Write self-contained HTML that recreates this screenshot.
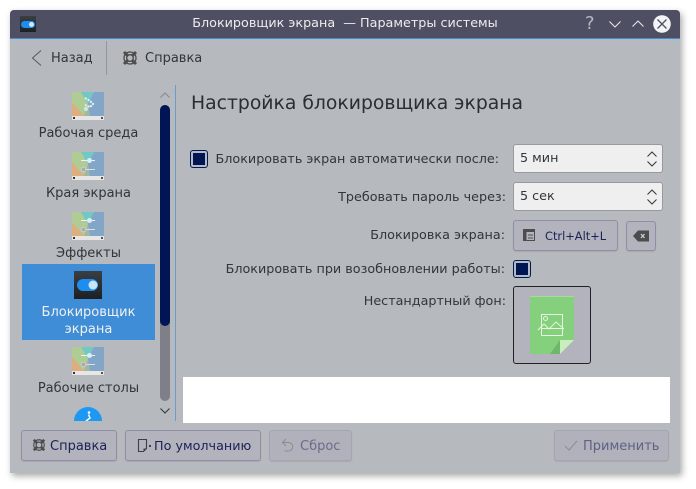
<!DOCTYPE html>
<html><head><meta charset="utf-8">
<style>
html,body{margin:0;padding:0;background:#fff;width:696px;height:489px;overflow:hidden}
body{font-family:"DejaVu Sans","Liberation Sans",sans-serif;font-size:13px;color:#31363b;position:relative}
#win{position:absolute;left:10px;top:10px;width:670px;height:463px;background:#b6b9bd;border-radius:4px 4px 0 0;box-shadow:2px 3px 7px rgba(0,0,0,.35);overflow:hidden}
.a{position:absolute;white-space:nowrap}
.t{position:absolute;white-space:nowrap;line-height:16px}
.c{text-align:center}
.r{text-align:right}
.f{font-size:12.75px}
.btn{position:absolute;box-sizing:border-box;border:1px solid #8e8ea6;border-radius:3px;background:#b3b3bd;height:31px;box-shadow:0 1px 1px rgba(0,0,0,.08)}
.btn.dis{border-color:#a3a4b4;background:#b0b1bb}
.combo{position:absolute;left:513px;width:150px;height:29px;box-sizing:border-box;background:#efefef;border:1px solid #98999e;border-radius:3px}
.cb{position:absolute;width:18px;height:18px;box-sizing:border-box;border:1px solid #001a57;border-radius:3px;background:#b6b9bd}
.cb i{position:absolute;left:2px;top:2px;width:12px;height:12px;background:#001553}
svg{position:absolute;overflow:visible}
</style></head><body>
<svg width="0" height="0" style="position:absolute"><defs>
<linearGradient id="wall" x1="0" y1="0" x2="1" y2="1"><stop offset="0" stop-color="#a8d8a0"/><stop offset=".5" stop-color="#8cc4bc"/><stop offset="1" stop-color="#7d9dc8"/></linearGradient>
<linearGradient id="sel" x1="0" y1="0" x2="0" y2="1"><stop offset="0" stop-color="#3a3f44"/><stop offset="1" stop-color="#1d2023"/></linearGradient>
<symbol id="kde" viewBox="0 0 32 28">
<rect width="32" height="24" fill="url(#wall)"/>
<polygon points="0,24 0,10 12,24" fill="#dfae7f"/>
<polygon points="0,10 12,24 16,12 9,0 0,0" fill="#b0cc95"/>
<polygon points="9,0 22,0 16,12" fill="#72c8c4"/>
<polygon points="22,0 32,0 32,24 18,24 16,12" fill="#82a6c8"/>
<polygon points="16,12 12,24 18,24" fill="#a3b5a4"/>
<rect y="24" width="32" height="4" fill="#e8e6e4"/>
<rect x="1" y="25" width="2" height="2" fill="#333"/>
<rect x="29" y="25" width="2" height="2" fill="#555"/>
</symbol>
<symbol id="sl" viewBox="0 0 32 28">
<use href="#kde" width="32" height="28"/>
<path d="M9 8.500H23" stroke="#eef" stroke-width="1"/>
<circle cx="17.500" cy="8.500" r="2.500" fill="#d8eef0"/>
<path d="M11 17.500H23" stroke="#dde" stroke-width="1"/>
<circle cx="11.500" cy="17.500" r="2.300" fill="#aaa" stroke="#ccc" stroke-width="1"/>
</symbol>
<symbol id="lifebuoy" viewBox="0 0 16 16">
<g fill="none" stroke="#4d4d4d">
<circle cx="8" cy="8" r="6" stroke-width="1.300"/>
<circle cx="8" cy="8" r="3.300" stroke-width="1.400"/>
<path d="M2 2 5.600 5.600M14 2 10.400 5.600M2 14 5.600 10.400M14 14 10.400 10.400" stroke-width="3"/>
</g>
</symbol>
</defs></svg>

<div id="win"></div>

<!-- title bar -->
<div class="a" style="left:10px;top:10px;width:670px;height:28px;background:#4f4f63;border-radius:4px 4px 0 0"></div>
<div class="a" style="left:10px;top:38px;width:670px;height:1px;background:#3d8ed8"></div>
<div class="a" style="left:20px;top:16px;width:16px;height:16px;background:linear-gradient(#3a3f44,#1d2023)"></div>
<div class="a" style="left:21px;top:21px;width:14px;height:7px;border-radius:4px;background:#1d8df0"></div>
<div class="a" style="left:29px;top:22px;width:5px;height:5px;border-radius:3px;background:#cfe8fb"></div>
<div class="t c" style="left:10px;width:670px;top:16px;color:#eceded;font-size:12.75px;line-height:16px">Блокировщик экрана &nbsp;— Параметры системы</div>
<div class="t" style="left:585px;top:14px;color:#b8b9c2;font-size:18px;line-height:20px">?</div>
<svg style="left:608px;top:18px" width="14" height="12"><path d="M1.500 3.500 7 9 12.500 3.500" fill="none" stroke="#e6e6ea" stroke-width="1.100"/></svg>
<svg style="left:631px;top:18px" width="14" height="12"><path d="M1.500 8.500 7 3 12.500 8.500" fill="none" stroke="#e6e6ea" stroke-width="1.100"/></svg>
<svg style="left:653px;top:15px" width="18" height="18"><circle cx="9" cy="9" r="8.800" fill="#f4f4f6"/><path d="M4.500 4.500 13.500 13.500M13.500 4.500 4.500 13.500" stroke="#4f4f63" stroke-width="1.300"/></svg>

<!-- toolbar -->
<svg style="left:30px;top:49px" width="14" height="18"><path d="M11 1.500 2.500 9 11 16.500" fill="none" stroke="#5b5f64" stroke-width="1.100"/></svg>
<div class="t" style="left:51px;top:51px">Назад</div>
<div class="a" style="left:106px;top:41px;width:1px;height:34px;background:#94979b"></div>
<svg style="left:122px;top:50px" width="16" height="16"><use href="#lifebuoy" width="16" height="16"/></svg>
<div class="t" style="left:145px;top:51px">Справка</div>

<!-- sidebar -->
<div class="a" style="left:22px;top:264px;width:133px;height:76px;background:#3f8dd6"></div>
<svg style="left:72px;top:92px" width="32" height="28"><use href="#kde" width="32" height="28"/>
<path d="M13 6l5 3 3 3-3 3-5-2" fill="none" stroke="#e8f4f4" stroke-width="2" stroke-dasharray="2 1"/><circle cx="14" cy="17" r="2" fill="#cfe6e6"/></svg>
<div class="t c" style="left:22px;width:133px;top:126px">Рабочая среда</div>
<svg style="left:72px;top:152px" width="32" height="28"><use href="#sl" width="32" height="28"/></svg>
<div class="t c" style="left:22px;width:133px;top:186px">Края экрана</div>
<svg style="left:72px;top:212px" width="32" height="28"><use href="#sl" width="32" height="28"/></svg>
<div class="t c" style="left:22px;width:133px;top:246px">Эффекты</div>

<svg style="left:74px;top:271px" width="28" height="28"><rect width="28" height="28" fill="url(#sel)"/><rect x="3" y="8" width="21" height="12" rx="6" fill="#1d8df0"/><circle cx="19" cy="14" r="4.500" fill="#c7e5fb"/></svg>
<div class="t c" style="left:22px;width:133px;top:305px;color:#eff0f1">Блокировщик</div>
<div class="t c" style="left:22px;width:133px;top:322px;color:#eff0f1">экрана</div>

<svg style="left:72px;top:347px" width="32" height="28"><use href="#sl" width="32" height="28"/></svg>
<div class="t c" style="left:22px;width:133px;top:381px">Рабочие столы</div>
<div class="a" style="left:74px;top:407px;width:28px;height:14px;overflow:hidden"><div style="width:28px;height:28px;border-radius:14px;background:#1d99f3"></div>
<svg style="left:10px;top:4px" width="9" height="11"><circle cx="5" cy="1.500" r="1.300" fill="#fff"/><path d="M4.500 3.500 6 7 2 10" stroke="#fff" stroke-width="1.500" fill="none"/></svg></div>

<!-- scrollbar -->
<svg style="left:159px;top:91px" width="12" height="8"><path d="M1.500 6.500 6 2 10.500 6.500" fill="none" stroke="#84878b" stroke-width="1"/></svg>
<div class="a" style="left:160px;top:105px;width:10px;height:296px;border-radius:5px;background:#7e7f88"></div>
<div class="a" style="left:160px;top:105px;width:10px;height:221px;border-radius:5px;background:#001553"></div>
<svg style="left:159px;top:407px" width="12" height="8"><path d="M1.500 1.500 6 6 10.500 1.500" fill="none" stroke="#31363b" stroke-width="1"/></svg>
<div class="a" style="left:175px;top:85px;width:1px;height:336px;background:#6d9ccb"></div>

<!-- content -->
<div class="t" style="left:191px;top:92px;font-size:18.8px;line-height:24px;color:#2a2e32">Настройка блокировщика экрана</div>

<div class="cb" style="left:190px;top:150px"><i></i></div>
<div class="t r f" style="left:190px;width:309px;top:152px">Блокировать экран автоматически после:</div>
<div class="combo" style="top:144px"><div class="t f" style="left:6px;top:6px">5 мин</div>
<svg style="left:132px;top:5px" width="12" height="18"><path d="M1.500 6.500 6 2 10.500 6.500M1.500 11.500 6 16 10.500 11.500" fill="none" stroke="#31363b" stroke-width="1"/></svg></div>

<div class="t r f" style="left:190px;width:316px;top:190px">Требовать пароль через:</div>
<div class="combo" style="top:182px"><div class="t f" style="left:6px;top:6px">5 сек</div>
<svg style="left:132px;top:5px" width="12" height="18"><path d="M1.500 6.500 6 2 10.500 6.500M1.500 11.500 6 16 10.500 11.500" fill="none" stroke="#31363b" stroke-width="1"/></svg></div>

<div class="t r f" style="left:190px;width:315px;top:228px">Блокировка экрана:</div>
<div class="btn" style="left:513px;top:220px;width:105px"><svg style="left:9px;top:8px" width="14" height="14"><rect x=".5" y=".5" width="11" height="11" fill="none" stroke="#4d4d4d"/><rect x="1" y="1" width="10" height="2" fill="#4d4d4d"/><rect x="1" y="3" width="2.500" height="8" fill="#4d4d4d"/><path d="M5 6h5M5 9h5" stroke="#4d4d4d"/></svg>
<div class="t" style="left:31px;top:7px;color:#1a2255;font-size:11.4px">Ctrl+Alt+L</div></div>
<div class="btn" style="left:626px;top:221px;width:30px;height:30px"><svg style="left:6px;top:8px" width="18" height="13"><path d="M0 6 5 .5H16V11.500H5Z" fill="#4a4c50"/><path d="M8 4 11.500 8M11.500 4 8 8" stroke="#ccc" stroke-width="1.300"/></svg></div>

<div class="t r f" style="left:190px;width:315px;top:262px">Блокировать при возобновлении работы:</div>
<div class="cb" style="left:513px;top:260px"><i></i></div>

<div class="t r f" style="left:190px;width:316px;top:294px">Нестандартный фон:</div>
<div class="a" style="left:513px;top:286px;width:78px;height:78px;box-sizing:border-box;border:1px solid #1f2124;border-radius:3px;background:#b3b3bd"></div>
<svg style="left:530px;top:296px" width="44" height="58">
<path d="M0 0H44V44L30 58H0Z" fill="#85d07c"/><rect width="44" height="1" fill="#a5dc9e"/>
<path d="M30 58 20 58 30 44Z" fill="#6cb066" opacity=".8"/>
<path d="M44 44 30 44V58Z" fill="#c8eebd"/>
<g fill="none" stroke="#e6f4e2" stroke-width="1"><rect x="11.500" y="18.500" width="21" height="21"/><path d="M11.500 32.500H32.500"/><path d="M8 34 14 28 19 33 26 26 34 33"/><circle cx="15.500" cy="22.500" r="2"/></g>
</svg>

<div class="a" style="left:183px;top:377px;width:487px;height:46px;background:#fff"></div>

<!-- bottom buttons -->
<div class="btn" style="left:21px;top:430px;width:96px"><svg style="left:10px;top:7px" width="14" height="14"><use href="#lifebuoy" width="14" height="14"/></svg><div class="t" style="left:28px;top:8px;color:#1a2255">Справка</div></div>
<div class="btn" style="left:125px;top:430px;width:136px"><svg style="left:11px;top:7px" width="16" height="16"><path d="M1.500 1.500H9.500V10.500L6.500 13.500H1.500Z" fill="none" stroke="#3c3f44" stroke-width="1.100"/><path d="M9.500 10.500H6.500V13.500Z" fill="#3c3f44"/><rect x="12" y="7" width="2" height="2" fill="#3c3f44"/></svg><div class="t f" style="left:28px;top:8px;color:#1a2255">По умолчанию</div></div>
<div class="btn dis" style="left:269px;top:430px;width:83px"><svg style="left:11px;top:7px" width="14" height="15"><path d="M5 1 1.500 4.500 5 8M1.500 4.500H7.500A4 4 0 0 1 7.500 13H3.500" fill="none" stroke="#8b8d92" stroke-width="1"/></svg><div class="t" style="left:30px;top:8px;color:#6a6c8a">Сброс</div></div>
<div class="btn dis" style="left:554px;top:430px;width:115px"><svg style="left:9px;top:8px" width="14" height="13"><path d="M1 7 5 11 13 2" fill="none" stroke="#8b8d92" stroke-width="1"/></svg><div class="t" style="left:28px;top:8px;color:#5f6186">Применить</div></div>
</body></html>
